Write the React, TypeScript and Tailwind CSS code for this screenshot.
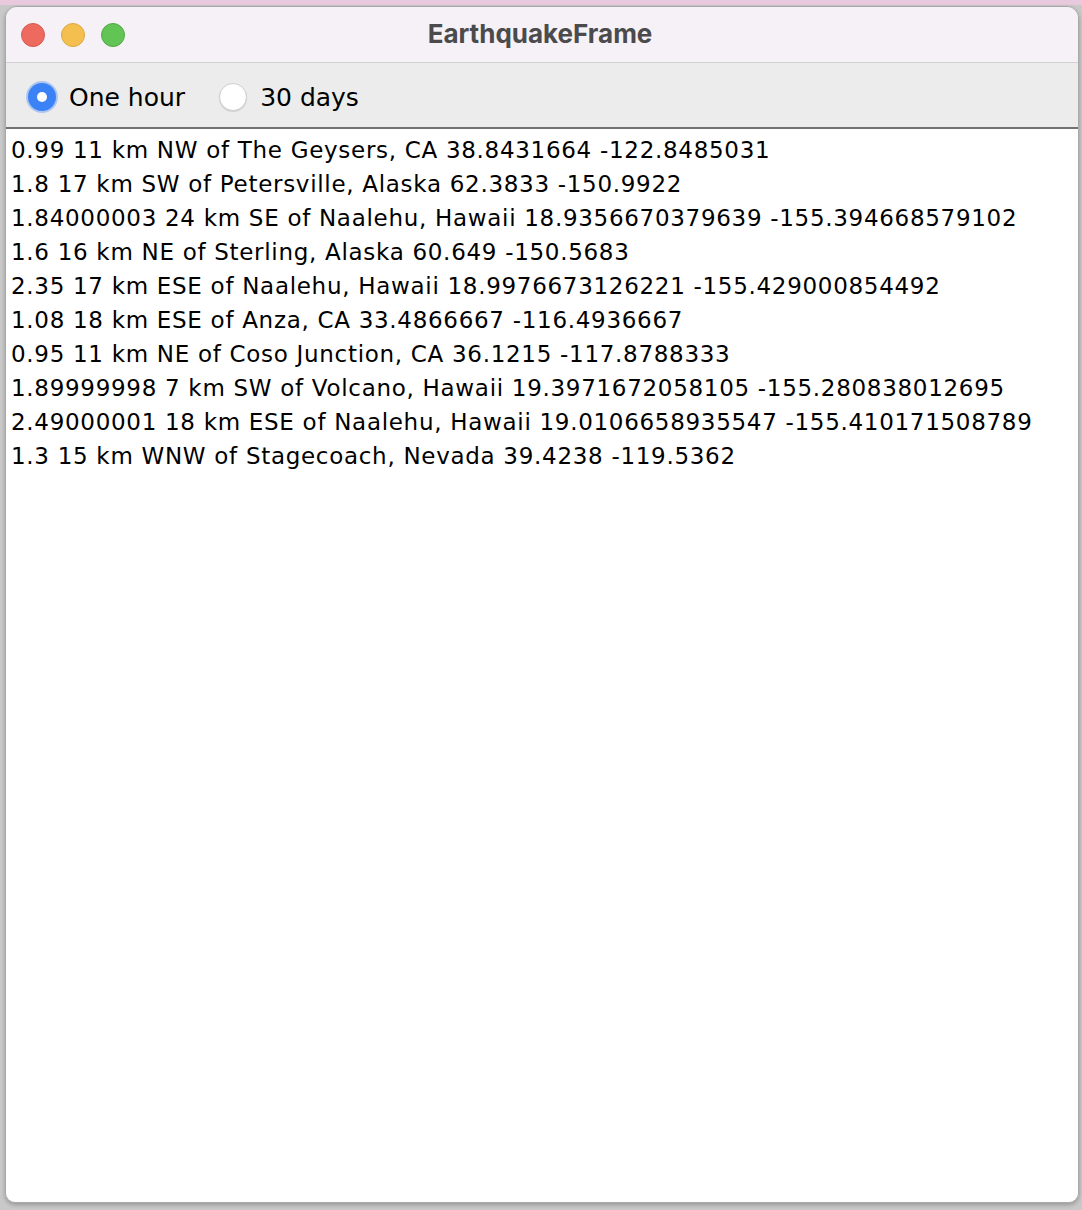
import React, { useState } from 'react';

const quakes = [
  '0.99 11 km NW of The Geysers, CA 38.8431664 -122.8485031',
  '1.8 17 km SW of Petersville, Alaska 62.3833 -150.9922',
  '1.84000003 24 km SE of Naalehu, Hawaii 18.9356670379639 -155.394668579102',
  '1.6 16 km NE of Sterling, Alaska 60.649 -150.5683',
  '2.35 17 km ESE of Naalehu, Hawaii 18.9976673126221 -155.429000854492',
  '1.08 18 km ESE of Anza, CA 33.4866667 -116.4936667',
  '0.95 11 km NE of Coso Junction, CA 36.1215 -117.8788333',
  '1.89999998 7 km SW of Volcano, Hawaii 19.3971672058105 -155.280838012695',
  '2.49000001 18 km ESE of Naalehu, Hawaii 19.0106658935547 -155.410171508789',
  '1.3 15 km WNW of Stagecoach, Nevada 39.4238 -119.5362',
];

const Radio = ({ checked, label, onClick }: { checked: boolean; label: string; onClick: () => void }) => (
  <button onClick={onClick} className="flex items-center gap-[13px]">
    {checked ? (
      <span className="w-[28px] h-[28px] rounded-full bg-[#3b82f7] shadow-[0_0_0_2px_rgba(59,130,247,0.35)] flex items-center justify-center">
        <span className="w-[10px] h-[10px] rounded-full bg-white" />
      </span>
    ) : (
      <span className="w-[28px] h-[28px] rounded-full bg-white border border-[#cfcfcf] shadow-[0_1px_1px_rgba(0,0,0,0.12)]" />
    )}
    <span className="text-[25px] text-black leading-none">{label}</span>
  </button>
);

export default function App() {
  const [mode, setMode] = useState<'hour' | 'month'>('hour');

  return (
    <div className="w-[1082px] h-[1210px] bg-[#c9c9c9] overflow-hidden flex flex-col font-['DejaVu_Sans',sans-serif]">
      <div className="h-[5px] bg-[#e9c9de] shrink-0" />
      <div className="flex-1 pl-[5px] pr-[3px] pb-[7px] pt-[1px]">
        <div className="h-full rounded-t-[12px] rounded-b-[10px] overflow-hidden flex flex-col border border-[#a9a9a9] shadow-[0_2px_4px_rgba(0,0,0,0.25)]">
          {/* title bar */}
          <div className="h-[56px] shrink-0 bg-[#f5f1f6] border-b border-[#d3d0d4] relative flex items-center justify-center">
            <div className="absolute left-[15px] top-[16px] flex gap-[16px]">
              <span className="w-[24px] h-[24px] rounded-full bg-[#ee6a5f] border border-[#d55a50]" />
              <span className="w-[24px] h-[24px] rounded-full bg-[#f5bf4f] border border-[#d9a83f]" />
              <span className="w-[24px] h-[24px] rounded-full bg-[#61c454] border border-[#52a944]" />
            </div>
            <span className="font-['Inter',sans-serif] font-bold text-[26px] text-[#4b4a4c] leading-none -mt-[2px] pr-[4px]">
              EarthquakeFrame
            </span>
          </div>

          {/* radio row */}
          <div className="h-[66px] shrink-0 bg-[#ececec] border-b-2 border-[#727272] flex items-center gap-[34px] pl-[22px] pt-[4px]">
            <Radio checked={mode === 'hour'} label="One hour" onClick={() => setMode('hour')} />
            <Radio checked={mode === 'month'} label="30 days" onClick={() => setMode('month')} />
          </div>

          {/* list */}
          <div className="flex-1 bg-white pl-[5px] pt-[4px] text-[23px] tracking-[0.7px] leading-[34px] text-black">
            {quakes.map((q) => (
              <div key={q} className="whitespace-nowrap">{q}</div>
            ))}
          </div>
        </div>
      </div>
    </div>
  );
}
